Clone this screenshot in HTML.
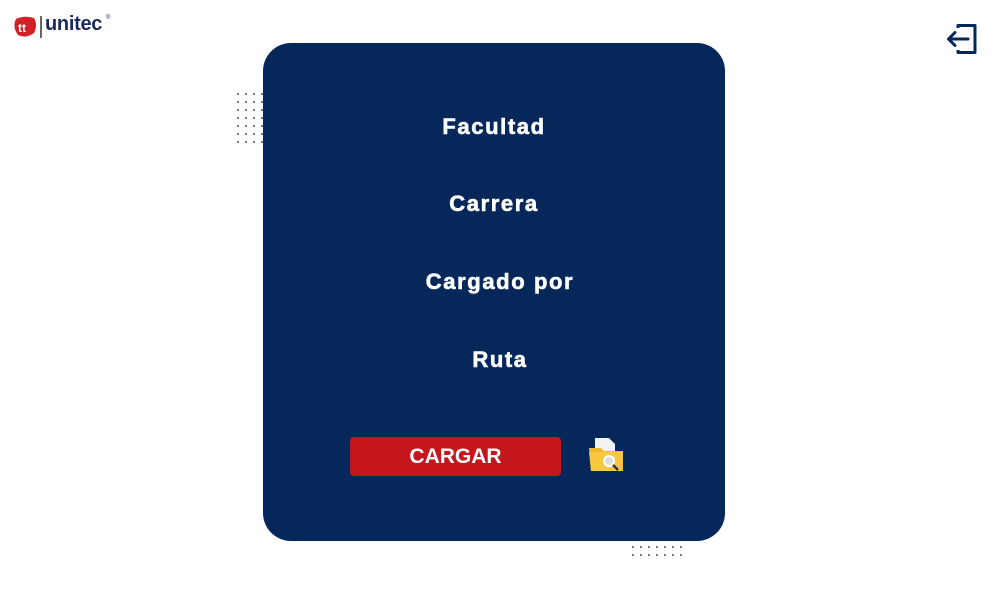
<!DOCTYPE html>
<html><head><style>
body{margin:0;width:1000px;height:600px;background:#fff;position:relative;overflow:hidden;font-family:"Liberation Sans",sans-serif}
.dots{position:absolute;background-image:radial-gradient(circle,#555 0.8px,transparent 1.1px);background-size:8px 8px}
.box{position:absolute;left:263px;top:43px;width:462px;height:498px;background:#06275a;border-radius:28px}
.t{position:absolute;color:#fff;font-weight:bold;font-size:22px;letter-spacing:1.6px;transform:translateX(-50%);white-space:nowrap;-webkit-text-stroke:0.6px #fff}
.btn{position:absolute;left:350px;top:437px;width:211px;height:39px;background:#c4161c;border-radius:4px;color:#fff;font-weight:bold;font-size:21px;text-align:center;line-height:39px}
</style></head><body>
<div class="dots" style="left:234px;top:90px;width:32px;height:56px"></div>
<div class="dots" style="left:629px;top:535px;width:56px;height:24px"></div>
<div class="box"></div>
<div class="t" style="left:494px;top:114px">Facultad</div>
<div class="t" style="left:494px;top:191px">Carrera</div>
<div class="t" style="left:500px;top:269px">Cargado por</div>
<div class="t" style="left:500px;top:347px">Ruta</div>
<div class="btn">CARGAR</div>
<svg style="position:absolute;left:586px;top:434px" width="42" height="42" viewBox="0 0 42 42">
<path d="M9 4h14l6 6v22H9z" fill="#f2f2f2"/>
<path d="M3 14h12l3 3h19v20H5z" fill="#f5b82a"/>
<path d="M3 18h34l-2 19H5z" fill="#f8c840"/>
<circle cx="23" cy="27" r="5" fill="#ddd" stroke="#fff" stroke-width="2"/>
<path d="M27 31l5 5" stroke="#333" stroke-width="2.5"/>
</svg>
<svg style="position:absolute;left:12px;top:15px" width="26" height="24" viewBox="0 0 26 24">
<path d="M4 4Q12 0 22 3Q26 10 22 18Q14 24 6 20Q0 12 4 4z" fill="#d32027"/>
<text x="6" y="17" fill="#fff" font-size="12" font-weight="bold" font-family="Liberation Sans">tt</text>
</svg>
<div style="position:absolute;left:40px;top:16px;width:1.5px;height:22px;background:#666"></div>
<div style="position:absolute;left:45px;top:13px;font-size:20px;font-weight:bold;color:#1b2a5e;letter-spacing:-0.3px">unitec</div>
<div style="position:absolute;left:106px;top:15px;font-size:6px;color:#1b2a5e">®</div>
<svg style="position:absolute;left:945px;top:23px" width="33" height="32" viewBox="0 0 33 32">
<path d="M13 5V2.5h17v27H13V27" fill="none" stroke="#06275a" stroke-width="3" stroke-linejoin="round"/>
<path d="M23 16H4M10 9.5L3.5 16L10 22.5" fill="none" stroke="#06275a" stroke-width="3" stroke-linecap="round" stroke-linejoin="round"/>
</svg>
</body></html>
